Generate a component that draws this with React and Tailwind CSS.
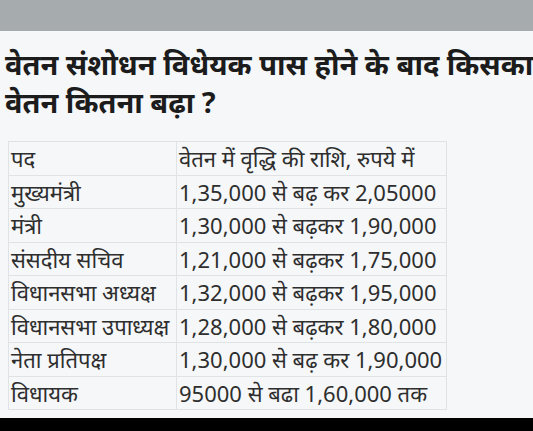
const rows = [
  ['पद', 'वेतन में वृद्धि की राशि, रुपये में'],
  ['मुख्यमंत्री', '1,35,000 से बढ़ कर 2,05000'],
  ['मंत्री', '1,30,000 से बढ़कर 1,90,000'],
  ['संसदीय सचिव', '1,21,000 से बढ़कर 1,75,000'],
  ['विधानसभा अध्यक्ष', '1,32,000 से बढ़कर 1,95,000'],
  ['विधानसभा उपाध्यक्ष', '1,28,000 से बढ़कर 1,80,000'],
  ['नेता प्रतिपक्ष', '1,30,000 से बढ़ कर 1,90,000'],
  ['विधायक', '95000 से बढा 1,60,000 तक'],
];

export default function App() {
  return (
    <div className="w-[533px] h-[431px] overflow-hidden flex flex-col bg-[#f5f7f8] font-['Noto_Sans',sans-serif]">
      <div className="h-[31px] bg-[#a6abad] shrink-0" />
      <div className="flex-1 px-[5px] pt-[14px]">
        <h1 className="text-[29px] leading-[38px] font-bold text-[#1c1c1c] whitespace-nowrap">
          वेतन संशोधन विधेयक पास होने के बाद किसका
          <br />
          वेतन कितना बढ़ा ?
        </h1>
        <table className="mt-[20px] ml-[3px] border-collapse text-[22px] text-[#2e2e2e]">
          <tbody>
            {rows.map(([a, b], i) => (
              <tr key={i} className="h-[33.5px]">
                <td className="w-[168px] border border-[#dfe3e6] px-[2px] py-0 leading-[32px] whitespace-nowrap">
                  {a}
                </td>
                <td className="w-[270px] border border-[#dfe3e6] px-[2px] py-0 leading-[32px] whitespace-nowrap">
                  {b}
                </td>
              </tr>
            ))}
          </tbody>
        </table>
      </div>
      <div className="h-[13px] bg-black shrink-0" />
    </div>
  );
}
